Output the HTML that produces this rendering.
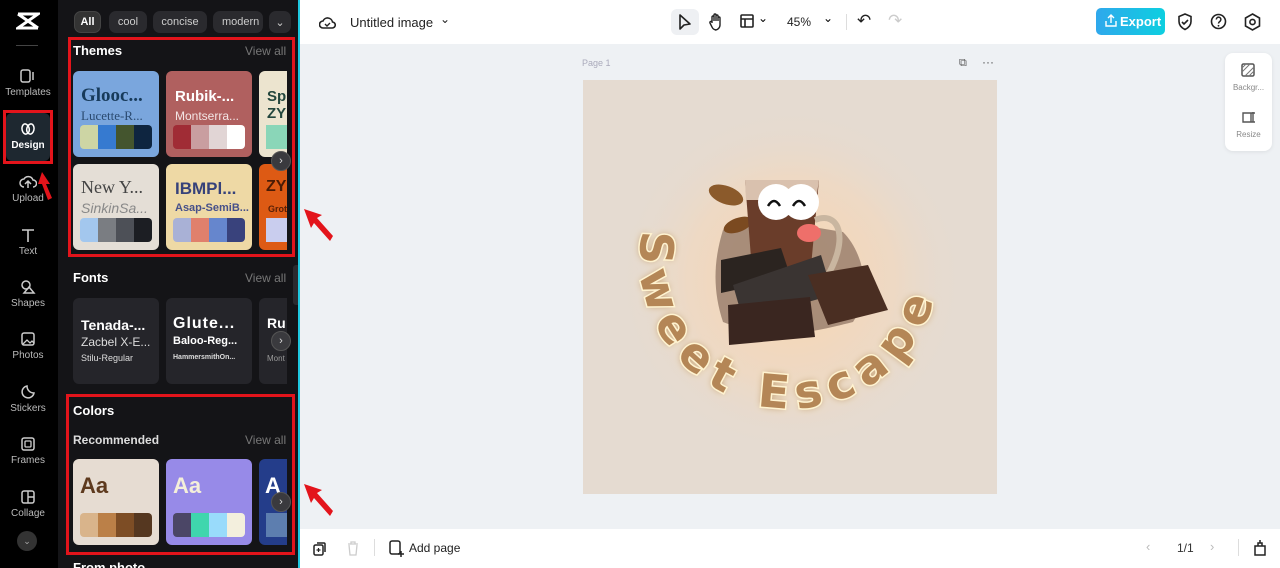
<!DOCTYPE html>
<html><head><meta charset="utf-8"><style>
*{box-sizing:border-box;margin:0;padding:0}
body{width:1280px;height:568px;overflow:hidden;font-family:"Liberation Sans",sans-serif;background:#eef1f4;position:relative}
.abs{position:absolute}
#rail{left:0;top:0;width:58px;height:568px;background:#000}
.ri{position:absolute;left:0;width:56px;text-align:center;color:#bbb;font-size:10px}
.ri svg{display:block;margin:0 auto 3px}
#panel{left:58px;top:0;width:240px;height:568px;background:#141417;overflow:hidden;color:#fff}
.chip{position:absolute;top:11px;height:22px;border-radius:7px;background:#2a2a2e;color:#ccc;font-size:11px;display:flex;align-items:center;justify-content:center}
.h{position:absolute;font-weight:bold;font-size:13px;color:#fff}
.va{position:absolute;font-size:12px;color:#777}
.card{position:absolute;width:86px;height:86px;border-radius:6px;overflow:hidden}
.pal{position:absolute;left:7px;bottom:8px;width:72px;height:24px;border-radius:4px;overflow:hidden;display:flex}
.pal i{flex:1}
.redbox{position:absolute;border:3px solid #e3141b}
.nav{position:absolute;width:20px;height:20px;border-radius:50%;background:#3a3a3e;border:1px solid #555;color:#ddd;font-size:11px;line-height:18px;text-align:center}
#top{left:300px;top:0;width:980px;height:44px;background:#fff}
#bot{left:300px;top:529px;width:980px;height:39px;background:#fff}
</style></head><body>
<div class="abs" style="left:298px;top:0;width:2px;height:568px;background:#1ec8e0"></div>
<div id="rail" class="abs">
 <svg class="abs" style="left:16px;top:12px" width="24" height="18" viewBox="0 0 24 18"><path d="M2 2h20L2 16h20M2 2l20 14" stroke="#fff" stroke-width="3" fill="none"/></svg>
 <div class="abs" style="left:16px;top:45px;width:22px;height:1px;background:#444"></div>
 <div class="ri" style="top:68px"><svg width="16" height="16"><rect x="1" y="2" width="9" height="12" rx="2" stroke="#ccc" fill="none" stroke-width="1.5"/><path d="M13 4v8" stroke="#ccc" stroke-width="1.5"/></svg>Templates</div>
 <div class="abs" style="left:3px;top:110px;width:50px;height:54px;border:3px solid #e3141b"></div>
 <div class="abs" style="left:6px;top:113px;width:44px;height:48px;background:#1e2830;border-radius:6px"></div>
 <div class="ri" style="top:121px;color:#fff;font-weight:bold"><svg width="16" height="16"><path d="M3 4c3-4 9 4 5 8s-8-4-5-8zM13 4c-3-4-9 4-5 8s8-4 5-8z" stroke="#fff" fill="none" stroke-width="1.5"/></svg>Design</div>
 <div class="ri" style="top:174px"><svg width="18" height="16"><path d="M5 13a4 4 0 010-8 5 5 0 019 1 3.5 3.5 0 010 7M9 14V7m-3 3l3-3 3 3" stroke="#ccc" fill="none" stroke-width="1.5"/></svg>Upload</div>
 <svg class="abs" style="left:36px;top:168px" width="22" height="34"><path d="M6 4l-4 12h4l6 16 4-2-6-14h4z" fill="#e3141b"/></svg>
 <div class="ri" style="top:227px"><svg width="16" height="16"><path d="M2 3h12M8 3v12" stroke="#ccc" stroke-width="1.6"/></svg>Text</div>
 <div class="ri" style="top:279px"><svg width="16" height="16"><circle cx="6" cy="6" r="4" stroke="#ccc" fill="none" stroke-width="1.5"/><path d="M9 8l5 6H4z" stroke="#ccc" fill="none" stroke-width="1.5"/></svg>Shapes</div>
 <div class="ri" style="top:331px"><svg width="16" height="16"><rect x="2" y="2" width="12" height="12" rx="2" stroke="#ccc" fill="none" stroke-width="1.5"/><path d="M3 13l4-4 3 3 2-2 2 2" stroke="#ccc" fill="none" stroke-width="1.3"/></svg>Photos</div>
 <div class="ri" style="top:384px"><svg width="16" height="16"><path d="M14 9a6 6 0 11-7-7c0 4 3 7 7 7z" stroke="#ccc" fill="none" stroke-width="1.5"/></svg>Stickers</div>
 <div class="ri" style="top:436px"><svg width="16" height="16"><rect x="2" y="2" width="12" height="12" rx="2" stroke="#ccc" fill="none" stroke-width="1.5"/><rect x="5" y="5" width="6" height="6" rx="1" stroke="#ccc" fill="none" stroke-width="1.3"/></svg>Frames</div>
 <div class="ri" style="top:489px"><svg width="16" height="16"><rect x="2" y="2" width="12" height="12" rx="2" stroke="#ccc" fill="none" stroke-width="1.5"/><path d="M8 2v12M8 8h6" stroke="#ccc" stroke-width="1.4"/></svg>Collage</div>
 <div class="abs" style="left:17px;top:531px;width:20px;height:20px;border-radius:50%;background:#333;color:#aaa;font-size:9px;text-align:center;line-height:20px">⌄</div>
</div>
<div id="panel" class="abs">
 <div class="chip" style="left:16px;width:27px;background:#333;color:#fff;font-weight:bold;border:1px solid #444">All</div>
 <div class="chip" style="left:51px;width:38px">cool</div>
 <div class="chip" style="left:95px;width:54px">concise</div>
 <div class="chip" style="left:155px;width:50px;justify-content:flex-start;padding-left:9px;overflow:hidden">modern</div>
 <div class="chip" style="left:211px;width:22px">⌄</div>
 <div class="redbox" style="left:10px;top:37px;width:227px;height:220px"></div>
 <div class="h" style="left:15px;top:43px">Themes</div><div class="va" style="left:187px;top:44px">View all</div>
 <div class="card" style="left:15px;top:71px;background:#7aa6dd"><div class="abs" style="left:8px;top:14px;font:bold 19px 'Liberation Serif',serif;color:#173a5a">Glooc...</div><div class="abs" style="left:8px;top:37px;font:13px 'Liberation Serif',serif;color:#2a4a70">Lucette-R...</div><div class="pal"><i style="background:#cdd5a4"></i><i style="background:#367ad0"></i><i style="background:#44552e"></i><i style="background:#0e2540"></i></div></div>
 <div class="card" style="left:108px;top:71px;background:#b0605f"><div class="abs" style="left:9px;top:17px;font:bold 15px sans-serif;color:#fff">Rubik-...</div><div class="abs" style="left:9px;top:38px;font:12px sans-serif;color:#f3e5e5">Montserra...</div><div class="pal"><i style="background:#a02c35"></i><i style="background:#c99ea0"></i><i style="background:#e1d5d5"></i><i style="background:#fff"></i></div></div>
 <div class="card" style="left:201px;top:71px;width:28px;border-radius:6px 0 0 6px;background:#ece4cf"><div class="abs" style="left:8px;top:17px;font:bold 15px sans-serif;color:#23463d">Sp<br>ZY</div><div class="abs" style="left:7px;bottom:8px;width:21px;height:24px;background:#8ad6b8"></div></div>
 <div class="card" style="left:15px;top:164px;background:#e4ded6"><div class="abs" style="left:8px;top:13px;font:18px 'Liberation Serif',serif;color:#444">New Y...</div><div class="abs" style="left:8px;top:36px;font:italic 14px sans-serif;color:#888">SinkinSa...</div><div class="pal"><i style="background:#a3c7ee"></i><i style="background:#7a7d82"></i><i style="background:#4d5057"></i><i style="background:#1c1e23"></i></div></div>
 <div class="card" style="left:108px;top:164px;background:#eed9a5"><div class="abs" style="left:9px;top:15px;font:bold 17px sans-serif;color:#36427a">IBMPl...</div><div class="abs" style="left:9px;top:38px;font:bold 11px sans-serif;color:#46508a">Asap-SemiB...</div><div class="pal"><i style="background:#a9b1d6"></i><i style="background:#e0806c"></i><i style="background:#6686cd"></i><i style="background:#39427c"></i></div></div>
 <div class="card" style="left:201px;top:164px;width:28px;border-radius:6px 0 0 6px;background:#dd5a14"><div class="abs" style="left:7px;top:14px;font:bold 16px sans-serif;color:#4a1b05">ZY</div><div class="abs" style="left:9px;top:40px;font:bold 9px sans-serif;color:#5a2006">Grot</div><div class="abs" style="left:7px;bottom:8px;width:21px;height:24px;background:#c9cdee"></div></div>
 <div class="nav" style="left:213px;top:151px">›</div>
 <div class="abs" style="left:235px;top:265px;width:6px;height:40px;background:#2a2a2e;border-radius:3px 0 0 3px"></div>
 <div class="h" style="left:15px;top:270px">Fonts</div><div class="va" style="left:187px;top:271px">View all</div>
 <div class="card" style="left:15px;top:298px;background:#25252a"><div class="abs" style="left:8px;top:19px;font:bold 14px sans-serif">Tenada-...</div><div class="abs" style="left:8px;top:37px;font:12px sans-serif;color:#ddd">Zacbel X-E...</div><div class="abs" style="left:8px;top:55px;font:9px sans-serif;color:#ddd">Stilu-Regular</div></div>
 <div class="card" style="left:108px;top:298px;background:#25252a"><div class="abs" style="left:7px;top:17px;font:bold 16px sans-serif;letter-spacing:1px">Glute...</div><div class="abs" style="left:7px;top:37px;font:bold 11px sans-serif">Baloo-Reg...</div><div class="abs" style="left:7px;top:56px;font:bold 7px sans-serif;color:#ddd">HammersmithOn...</div></div>
 <div class="card" style="left:201px;top:298px;width:28px;border-radius:6px 0 0 6px;background:#25252a"><div class="abs" style="left:8px;top:17px;font:bold 14px sans-serif">Ru</div><div class="abs" style="left:8px;top:56px;font:8px sans-serif;color:#999">Mont</div></div>
 <div class="nav" style="left:213px;top:331px">›</div>
 <div class="redbox" style="left:8px;top:394px;width:229px;height:161px"></div>
 <div class="h" style="left:15px;top:403px">Colors</div>
 <div style="position:absolute;left:15px;top:433px;font-size:12px;font-weight:bold;color:#ddd">Recommended</div><div class="va" style="left:187px;top:433px">View all</div>
 <div class="card" style="left:15px;top:459px;background:#e6dcd2"><div class="abs" style="left:7px;top:14px;font:bold 22px sans-serif;color:#5e3a1e">Aa</div><div class="pal"><i style="background:#d9b48b"></i><i style="background:#bb8048"></i><i style="background:#7d4d25"></i><i style="background:#553720"></i></div></div>
 <div class="card" style="left:108px;top:459px;background:#978ae8"><div class="abs" style="left:7px;top:14px;font:bold 22px sans-serif;color:#f4efda">Aa</div><div class="pal"><i style="background:#4b4666"></i><i style="background:#3fd6ad"></i><i style="background:#99dbfb"></i><i style="background:#f3efdd"></i></div></div>
 <div class="card" style="left:201px;top:459px;width:28px;border-radius:6px 0 0 6px;background:#243d8a"><div class="abs" style="left:6px;top:14px;font:bold 22px sans-serif;color:#fff">A</div><div class="abs" style="left:7px;bottom:8px;width:21px;height:24px;background:#5d7eaf"></div></div>
 <div class="nav" style="left:213px;top:492px">›</div>
 <div class="h" style="left:15px;top:560px">From photo</div>
</div>
<svg class="abs" style="left:300px;top:205px" width="36" height="40"><path d="M30 36L14 18l-3 5L4 4l18 6-5 3 16 18z" fill="#e3141b"/></svg>
<svg class="abs" style="left:300px;top:480px" width="36" height="40"><path d="M30 36L14 18l-3 5L4 4l18 6-5 3 16 18z" fill="#e3141b"/></svg>
<div id="top" class="abs">
 <svg class="abs" style="left:19px;top:14px" width="17" height="16"><path d="M4 14a3.5 3.5 0 010-7 5 5 0 019.5 1A3 3 0 0113 14z" stroke="#222" fill="none" stroke-width="1.6"/><path d="M6 10l2 2 3-3" stroke="#222" fill="none" stroke-width="1.4"/></svg>
 <div class="abs" style="left:50px;top:15px;font-size:13px;color:#222">Untitled image</div>
 <div class="abs" style="left:140px;top:12px;font-size:12px;color:#222">⌄</div>
 <div class="abs" style="left:371px;top:9px;width:28px;height:26px;border-radius:6px;background:#eef0f3"></div>
 <svg class="abs" style="left:378px;top:14px" width="14" height="16"><path d="M2 1v14l4-4 6-1z" stroke="#222" fill="none" stroke-width="1.6" stroke-linejoin="round"/></svg>
 <svg class="abs" style="left:408px;top:13px" width="16" height="18"><path d="M4 10V4a1 1 0 012 0v4-6a1 1 0 012 0v6-5a1 1 0 012 0v5-3a1 1 0 012 0v7a5 5 0 01-5 5H8a5 5 0 01-4-3L2 10a1 1 0 012-1z" stroke="#222" fill="none" stroke-width="1.4"/></svg>
 <svg class="abs" style="left:440px;top:14px" width="14" height="14"><rect x="1" y="1" width="12" height="12" rx="1" stroke="#222" fill="none" stroke-width="1.6"/><path d="M1 5h12M5 5v8" stroke="#222" stroke-width="1.6"/></svg>
 <div class="abs" style="left:458px;top:11px;font-size:12px">⌄</div>
 <div class="abs" style="left:487px;top:15px;font-size:12px;color:#222">45%</div>
 <div class="abs" style="left:523px;top:11px;font-size:12px">⌄</div>
 <div class="abs" style="left:546px;top:14px;width:1px;height:16px;background:#ddd"></div>
 <div class="abs" style="left:557px;top:11px;font-size:17px;color:#222">↶</div>
 <div class="abs" style="left:588px;top:11px;font-size:17px;color:#ccc">↷</div>
 <div class="abs" style="left:796px;top:8px;width:69px;height:27px;border-radius:5px;background:linear-gradient(90deg,#2fa8ec,#0dcfe0);color:#fff;font-weight:bold;font-size:13px;line-height:27px;padding-left:24px">Export</div>
 <svg class="abs" style="left:805px;top:14px" width="12" height="14"><path d="M6 9V1M3 4l3-3 3 3M1 7v5h10V7" stroke="#fff" fill="none" stroke-width="1.4"/></svg>
 <svg class="abs" style="left:877px;top:13px" width="16" height="18"><path d="M8 1l6 2.5v5c0 4-3 6.5-6 8-3-1.5-6-4-6-8v-5z" stroke="#222" fill="none" stroke-width="1.6"/><path d="M5 9l2 2 4-4" stroke="#222" fill="none" stroke-width="1.6"/></svg>
 <svg class="abs" style="left:910px;top:13px" width="17" height="17"><circle cx="8.5" cy="8.5" r="7" stroke="#222" fill="none" stroke-width="1.6"/><path d="M6.3 6.5a2.3 2.3 0 114 1.5c-1 .8-1.8 1.2-1.8 2.5" stroke="#222" fill="none" stroke-width="1.5"/><circle cx="8.5" cy="12.8" r=".9" fill="#222"/></svg>
 <svg class="abs" style="left:944px;top:13px" width="17" height="18"><path d="M8.5 1l7 4v8l-7 4-7-4V5z" stroke="#222" fill="none" stroke-width="1.6"/><circle cx="8.5" cy="9" r="2.6" stroke="#222" fill="none" stroke-width="1.6"/></svg>
</div>
<div class="abs" style="left:582px;top:58px;font-size:9px;color:#aab">Page 1</div>
<div class="abs" style="left:959px;top:57px;font-size:11px;color:#555">⧉</div>
<div class="abs" style="left:982px;top:55px;font-size:12px;color:#555">···</div>
<div class="abs" style="left:1225px;top:53px;width:47px;height:98px;background:#fff;border-radius:8px;box-shadow:0 1px 4px rgba(0,0,0,.08)"></div>
<svg class="abs" style="left:1241px;top:63px" width="14" height="14"><rect x="1" y="1" width="12" height="12" rx="1.5" stroke="#555" fill="none" stroke-width="1.5"/><path d="M1 9l8-8M4 13l9-9M1 5l4-4M8 13l5-5" stroke="#777" stroke-width="1"/></svg>
<div class="abs" style="left:1225px;top:83px;width:47px;text-align:center;font-size:8px;color:#888">Backgr...</div>
<svg class="abs" style="left:1241px;top:110px" width="14" height="14"><path d="M2 3h8v9H2zM12 2v10M10 3h4M10 12h4" stroke="#555" fill="none" stroke-width="1.4"/></svg>
<div class="abs" style="left:1225px;top:130px;width:47px;text-align:center;font-size:8px;color:#888">Resize</div>

<div class="abs" style="left:583px;top:80px;width:414px;height:414px;background:#e5dbd1;overflow:hidden">
<svg width="414" height="414" viewBox="0 0 414 414">
 <defs>
  <radialGradient id="g" cx="50%" cy="50%" r="50%"><stop offset="0" stop-color="#fbd6ad"/><stop offset=".6" stop-color="#f1d8bf" stop-opacity=".7"/><stop offset="1" stop-color="#e5dbd1" stop-opacity="0"/></radialGradient>
  <filter id="glow" x="-20%" y="-20%" width="140%" height="140%"><feGaussianBlur stdDeviation="4" result="b"/><feMerge><feMergeNode in="b"/><feMergeNode in="SourceGraphic"/></feMerge></filter>
  <path id="arc" d="M62 140 A150 150 0 1 0 352 140"/>
 </defs>
 <circle cx="208" cy="200" r="175" fill="url(#g)"/>
 <path d="M140 150c10-10 30-12 60-8l60 10c20 20 30 60 10 90-40 10-80 20-130 0-10-30-10-60 0-92z" fill="#8f7463" opacity=".75"/>
 <ellipse cx="143" cy="115" rx="18" ry="9" fill="#8b5a2b" transform="rotate(20 143 115)"/>
 <ellipse cx="155" cy="145" rx="15" ry="7" fill="#7b4a20" transform="rotate(-20 155 145)"/>
 <path d="M162 100h74l-12 130h-52z" fill="#6a3d2a"/>
 <path d="M162 100h74l-3 20h-70z" fill="#d9c1ae"/>
 <path d="M232 140c25-10 35 20 10 60" stroke="#c9b6a0" stroke-width="6" fill="none"/>
 <circle cx="193" cy="122" r="18" fill="#fff"/><circle cx="218" cy="122" r="18" fill="#fff"/>
 <path d="M185 126q6-10 12 0M210 126q6-10 12 0" stroke="#111" stroke-width="2.5" fill="none"/>
 <ellipse cx="226" cy="153" rx="12" ry="9" fill="#ee6f6a"/>
 <path d="M138 180l60-12 10 30-70 15z" fill="#2b2420"/>
 <path d="M150 205l88-30 12 40-90 25z" fill="#3a3432"/>
 <path d="M225 195l60-10 20 45-60 15z" fill="#4a2e22"/>
 <path d="M145 225l82-8 5 40-86 8z" fill="#3a2620"/>
 <text font-family="'DejaVu Sans',sans-serif" font-weight="bold" font-size="46" fill="#b48656" stroke="#fff3d0" stroke-width="3" paint-order="stroke" letter-spacing="9" filter="url(#glow)"><textPath href="#arc" startOffset="2%">Sweet Escape</textPath></text>
</svg>
</div>

<div id="bot" class="abs">
 <svg class="abs" style="left:13px;top:12px" width="14" height="15"><rect x="1" y="4" width="9" height="10" rx="1.5" stroke="#222" fill="none" stroke-width="1.5"/><path d="M4 2h7a1 1 0 011 1v8" stroke="#222" fill="none" stroke-width="1.5"/><path d="M5.5 7v4M3.5 9h4" stroke="#222" stroke-width="1.2"/></svg>
 <svg class="abs" style="left:47px;top:12px" width="12" height="15"><path d="M1 3h10M4 3V1h4v2M2 4l1 10h6l1-10" stroke="#ccc" fill="none" stroke-width="1.3"/></svg>
 <div class="abs" style="left:74px;top:10px;width:1px;height:17px;background:#ddd"></div>
 <svg class="abs" style="left:89px;top:11px" width="16" height="17"><rect x="1" y="1" width="10" height="13" rx="2" stroke="#222" fill="none" stroke-width="1.5"/><path d="M12 11v6M9 14h6" stroke="#222" stroke-width="1.5"/></svg>
 <div class="abs" style="left:109px;top:12px;font-size:12px;color:#222">Add page</div>
 <div class="abs" style="left:846px;top:10px;font-size:13px;color:#bbb">‹</div>
 <div class="abs" style="left:877px;top:12px;font-size:12px;color:#333">1/1</div>
 <div class="abs" style="left:910px;top:10px;font-size:13px;color:#bbb">›</div>
 <div class="abs" style="left:938px;top:10px;width:1px;height:17px;background:#ddd"></div>
 <svg class="abs" style="left:953px;top:10px" width="14" height="17"><path d="M2 7h10v9H2zM5 7V4h4v3M7 1v3" stroke="#222" fill="none" stroke-width="1.5"/></svg>
</div>
</body></html>
